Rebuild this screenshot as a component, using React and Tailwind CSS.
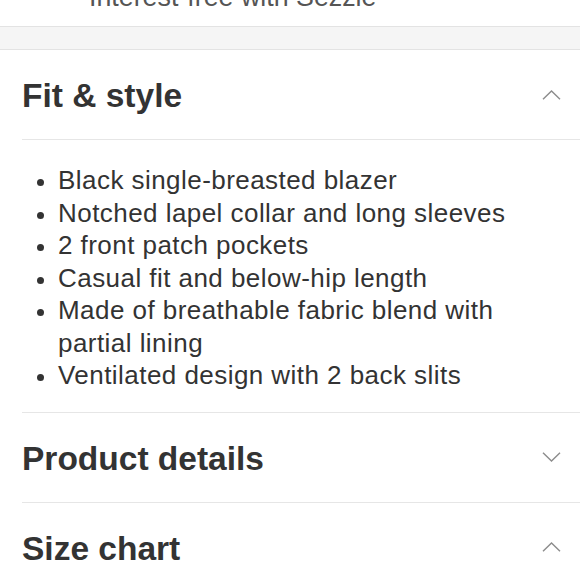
import React from 'react';

const ChevronUp = () => (
  <svg width="19" height="10" viewBox="0 0 19 10" fill="none" stroke="#8c8c8c" strokeWidth="1.4">
    <path d="M1 9.2 L9.5 1 L18 9.2" />
  </svg>
);

const ChevronDown = () => (
  <svg width="19" height="10" viewBox="0 0 19 10" fill="none" stroke="#8c8c8c" strokeWidth="1.4">
    <path d="M1 0.8 L9.5 9 L18 0.8" />
  </svg>
);

const items = [
  'Black single-breasted blazer',
  'Notched lapel collar and long sleeves',
  '2 front patch pockets',
  'Casual fit and below-hip length',
  'Made of breathable fabric blend with partial lining',
  'Ventilated design with 2 back slits',
];

const Section = ({ title, open, children }) => (
  <div className="pl-[22px]">
    <div className="flex items-center justify-between h-[89px] pr-[19px]">
      <h2 className="pt-[4px] text-[33.5px] font-bold text-[#333]">{title}</h2>
      {open ? <ChevronUp /> : <ChevronDown />}
    </div>
    {children}
  </div>
);

export default function App() {
  return (
    <div className="w-[580px] h-[580px] overflow-hidden bg-white" style={{ fontFamily: '"Liberation Sans", Arial, sans-serif' }}>
      <div className="h-[27px] overflow-hidden relative border-b border-[#e3e3e3]">
        <div className="absolute left-[89px] bottom-[15px] text-[26.8px] leading-none text-[#555]">Interest-free with Sezzle</div>
      </div>
      <div className="h-[23px] bg-[#f5f5f5] border-b border-[#e3e3e3]" />
      <Section title="Fit & style" open>
        <div className="border-t border-[#e6e6e6]">
          <ul className="pt-[24px] pb-[20px] pl-[14px] pr-[60px] text-[26px] tracking-[0.45px] leading-[32.5px] text-[#333]">
            {items.map((t) => (
              <li key={t} className="flex">
                <span className="w-[22px] shrink-0">
                  <span className="block w-[7px] h-[7px] ml-[1px] mt-[15px] rounded-full bg-[#333]" />
                </span>
                <span>{t}</span>
              </li>
            ))}
          </ul>
        </div>
      </Section>
      <div className="ml-[22px] border-t border-[#e6e6e6]" />
      <Section title="Product details" />
      <div className="ml-[22px] border-t border-[#e6e6e6]" />
      <Section title="Size chart" open />
    </div>
  );
}
